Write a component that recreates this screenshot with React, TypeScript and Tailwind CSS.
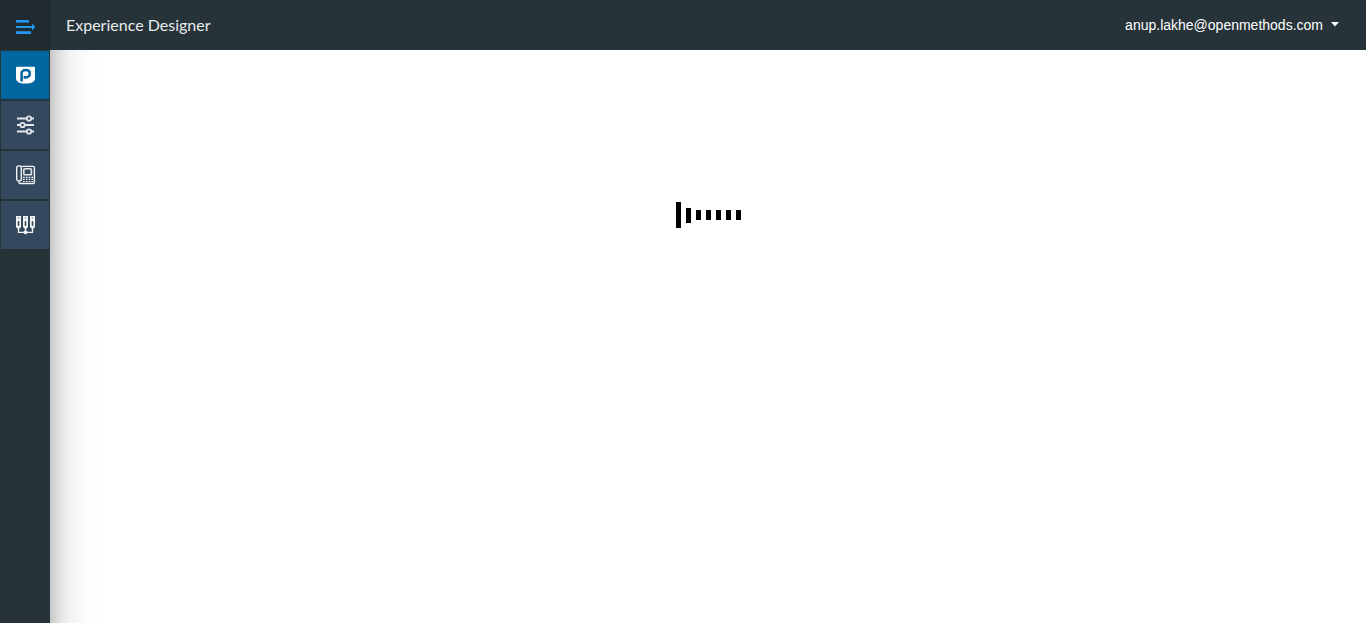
import React from "react";

function ToggleIcon() {
  return (
    <svg width="20" height="16" viewBox="0 0 20 16" fill="#2196f3" aria-hidden="true">
      <rect x="0" y="1" width="13" height="2.6" />
      <rect x="0" y="7" width="17" height="2" />
      <path d="M16 4.6 19.3 8 16 11.4z" />
      <rect x="0" y="12.2" width="15" height="2.8" />
    </svg>
  );
}

function BrandIcon() {
  return (
    <svg width="20" height="20" viewBox="0 0 20 20" aria-hidden="true">
      <path d="M0 2.5Q0 1.8 0.8 1.8H18.2Q19 1.8 19 2.5V13.2C19 16.8 15.5 18.6 9.5 18.6S0 16.8 0 13.2z" fill="#fff" />
      <path
        d="M5.6 16.6V8.6C5.6 6.2 7.4 5 9.6 5C12.2 5 13.8 6.4 13.8 8.7S12.2 12.4 9.8 12.4H7.6"
        fill="none"
        stroke="#0567a2"
        strokeWidth="2.6"
      />
    </svg>
  );
}

function SlidersIcon() {
  return (
    <svg width="18" height="20" viewBox="0 0 18 20" fill="none" stroke="#e3e6ea" strokeWidth="1.8" aria-hidden="true">
      <path d="M0 3.5H9.5M14.5 3.5H17M0 10H3M8 10H17M0 16.5H9.5M14.5 16.5H17" />
      <circle cx="12" cy="3.5" r="2.2" />
      <circle cx="5.5" cy="10" r="2.2" />
      <circle cx="12" cy="16.5" r="2.2" />
    </svg>
  );
}

function PhoneIcon() {
  return (
    <svg width="20" height="20" viewBox="0 0 20 20" fill="none" stroke="#f1f3f5" strokeWidth="1.4" aria-hidden="true">
      <rect x="0.7" y="0.9" width="4.6" height="15" rx="1.8" />
      <path d="M5.3 1.4H17.3Q18.4 1.4 18.4 2.6V17.2Q18.4 18.5 17.3 18.5H4.4Q2.6 18.5 2.6 15.8" />
      <rect x="7.8" y="3.8" width="7.6" height="6" rx="0.8" stroke="#dfe4e9" strokeWidth="1.6" />
      <path d="M7 12.3H8.7M9.8 12.3H11.5M12.6 12.3H14.3M15.4 12.3H17M7 14.4H8.7M9.8 14.4H11.5M12.6 14.4H14.3M15.4 14.4H17M7 16.5H8.7M9.8 16.5H11.5M12.6 16.5H14.3M15.4 16.5H17" strokeWidth="1.2" />
    </svg>
  );
}

function ConnectorsIcon() {
  return (
    <svg width="20" height="20" viewBox="0 0 20 20" fill="none" stroke="#f4f5f7" aria-hidden="true">
      {[2.5, 9.5, 16.5].map((x) => (
        <g key={x}>
          <path
            d={`M${x - 2.5} 1H${x + 2.5}V11.5L${x + 1.3} 13.5H${x - 1.3}L${x - 2.5} 11.5z`}
            fill="#f4f5f7"
            stroke="none"
          />
          <rect x={x - 0.8} y="6" width="1.6" height="5" rx="0.8" fill="#34495e" stroke="none" />
          <rect x={x - 0.8} y="2.2" width="1.6" height="1.4" fill="#8d99a6" stroke="none" />
        </g>
      ))}
      <path d="M2.5 13V17.3H16.5V13M9.5 13V17" strokeWidth="1.3" />
      <circle cx="9.5" cy="17.3" r="2" fill="#f4f5f7" stroke="none" />
    </svg>
  );
}

const navItems = [
  { label: "PopFlow", Icon: BrandIcon, active: true },
  { label: "Settings", Icon: SlidersIcon, active: false },
  { label: "Phone", Icon: PhoneIcon, active: false },
  { label: "Connectors", Icon: ConnectorsIcon, active: false },
];

const loaderBars = ["h-[26px]", "h-[15px]", "h-[10px]", "h-[10px]", "h-[10px]", "h-[10px]", "h-[10px]"];

export default function App() {
  return (
    <div className="flex min-h-screen flex-col bg-white font-['Liberation_Sans',Arial,sans-serif]">
      <header className="flex h-[50px] items-center bg-[#263339] text-white">
        <button
          type="button"
          aria-label="Toggle menu"
          className="flex h-full w-[50px] shrink-0 items-center justify-center bg-[#202b30] pt-1 pl-0.5"
        >
          <ToggleIcon />
        </button>
        <h1 className="pl-4 font-['Lato',sans-serif] text-base leading-6 text-[#e9ebec]">Experience Designer</h1>
        <button type="button" className="mr-[27px] ml-auto flex items-center gap-2 text-sm leading-5">
          <span>anup.lakhe@openmethods.com</span>
          <svg width="8" height="6" viewBox="0 0 8 6" fill="currentColor" aria-hidden="true">
            <path d="M0 0H8L4 4.5z" />
          </svg>
        </button>
      </header>
      <div className="flex flex-1">
        <nav aria-label="Main" className="flex w-[50px] shrink-0 flex-col bg-[#263339]">
          {navItems.map(({ label, Icon, active }) => (
            <a
              key={label}
              href="#"
              aria-label={label}
              aria-current={active ? "page" : undefined}
              className={`flex h-[50px] items-center justify-center border border-[#263339] pl-0.5 ${
                active ? "bg-[#0267a1]" : "bg-[#34495e]"
              }`}
            >
              <Icon />
            </a>
          ))}
        </nav>
        <main className="flex-1 bg-[linear-gradient(to_right,#c6c6c6_0px,#d6d6d6_5px,#e6e6e6_12px,#f3f3f3_21px,#fbfbfb_34px,#ffffff_50px)] pt-[152px]">
          <div role="status" aria-label="Loading" className="flex h-[26px] items-center justify-center gap-[5px]">
            {loaderBars.map((height, i) => (
              <span key={i} className={`w-[5px] bg-black ${height}`} />
            ))}
          </div>
        </main>
      </div>
    </div>
  );
}
